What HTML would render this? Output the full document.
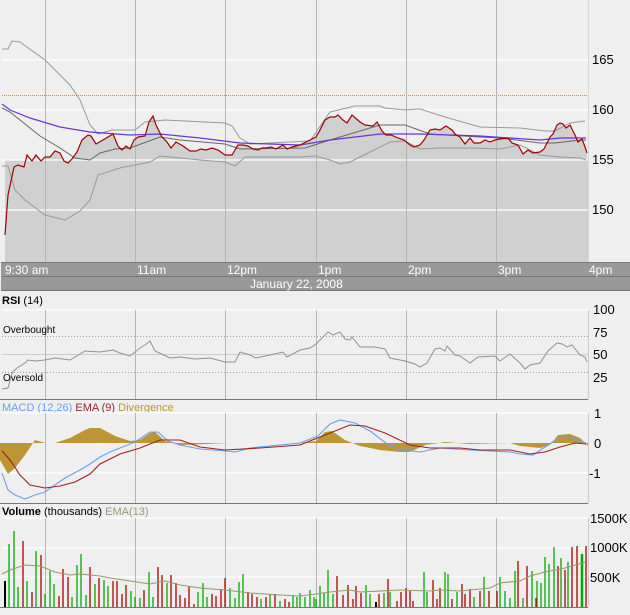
<!DOCTYPE html>
<html><head><meta charset="utf-8"><style>
html,body{margin:0;padding:0;background:#efefef;width:630px;height:615px;overflow:hidden}
svg{display:block}
text{font-family:"Liberation Sans","DejaVu Sans",sans-serif}
</style></head><body>
<svg width="630" height="615" viewBox="0 0 630 615" xmlns="http://www.w3.org/2000/svg">
<rect width="630" height="615" fill="#efefef"/>
<!-- MAIN PRICE PANEL -->
<g stroke="#ffffff" stroke-width="1.2">
<line x1="2" y1="60" x2="588" y2="60"/><line x1="2" y1="110" x2="588" y2="110"/>
</g>
<line x1="2" y1="95.5" x2="588" y2="95.5" stroke="#d4804a" stroke-width="1" stroke-dasharray="1,1"/>
<polygon fill="#d0d0d0" points="5,262 5,235 8,195 14,167 18,165 24,167 27,155 32,161 36,155 41,161 45,157 50,157 55,151 60,153 64,161 68,163 72,159 77,152 82,140 88,135 91,136 96,144 103,140 113,134 118,146 122,150 126,146 130,149 134,140 138,137 145,136 149,122 153,116 156,125 162,137 167,142 171,148 176,142 183,146 190,151 196,151 201,149 206,150 212,148 218,150 225,155 232,155 238,145 243,145 248,146 253,149 258,150 262,148 266,148 271,147 276,149 283,145 287,149 292,147 300,145 306,142 312,139 316,137 320,130 325,120 330,117 335,117 338,115 343,120 347,123 352,115 360,122 365,125 373,126 377,122 382,131 386,135 391,135 398,138 404,140 410,145 414,147 420,145 424,140 430,130 435,129 440,130 446,126 452,130 455,134 460,137 465,144 470,138 474,143 480,143 485,140 490,142 495,140 500,139 508,138 512,143 518,145 523,154 528,150 533,153 540,152 544,149 550,137 553,134 557,125 560,123 563,124 566,128 570,125 575,135 578,142 582,139 585,147 587,153 587,262"/>
<rect x="5" y="160" width="583" height="102" fill="#d0d0d0"/>
<g stroke="#ffffff" stroke-width="1.2"><line x1="2" y1="160" x2="588" y2="160"/><line x1="2" y1="210" x2="588" y2="210"/></g>
<g stroke="#b4b4b4" stroke-width="1">
<line x1="45.5" y1="0" x2="45.5" y2="262"/><line x1="135.5" y1="0" x2="135.5" y2="262"/><line x1="225.5" y1="0" x2="225.5" y2="262"/><line x1="316.5" y1="0" x2="316.5" y2="262"/><line x1="406.5" y1="0" x2="406.5" y2="262"/><line x1="496.5" y1="0" x2="496.5" y2="262"/>
</g>
<line x1="588.5" y1="0" x2="588.5" y2="262" stroke="#d8d8d8"/>
<g fill="none" stroke-width="1">
<polyline stroke="#999" points="2,49 8,49 12,41 20,42 45,60 60,75 70,85 80,100 90,125 98,134 112,130 135,130 145,122 165,120 225,123 232,126 240,138 250,144 310,141 330,112 355,106 380,106 385,108 405,110 420,109 445,117 480,127 520,128 545,131 555,131 570,123 585,121"/>
<polyline stroke="#999" points="2,166 8,166 15,190 25,200 45,215 65,220 80,211 90,200 98,175 120,168 135,165 150,162 160,156 200,160 225,162 235,166 245,157 300,157 315,156 330,160 340,164 350,162 370,152 390,142 405,141 420,149 440,148 470,148 500,149 520,145 540,155 560,157 580,158 586,160"/>
<polyline stroke="#666" points="2,108 10,112 20,120 40,136 60,148 75,158 90,160 100,153 115,149 130,148 160,137 180,140 225,144 240,149 305,148 330,140 380,125 405,125 430,134 480,137 500,138 540,143 555,143 580,140 586,140"/>
<polyline stroke="#6a35d8" stroke-width="1.2" points="2,104 10,110 30,118 60,127 90,132 130,135 160,134 200,138 240,143 300,145 330,140 380,134 420,134 480,136 540,140 560,138 586,138"/>
<polyline stroke="#a00000" stroke-width="1.2" points="5,235 8,195 14,167 18,165 24,167 27,155 32,161 36,155 41,161 45,157 50,157 55,151 60,153 64,161 68,163 72,159 77,152 82,140 88,135 91,136 96,144 103,140 113,134 118,146 122,150 126,146 130,149 134,140 138,137 145,136 149,122 153,116 156,125 162,137 167,142 171,148 176,142 183,146 190,151 196,151 201,149 206,150 212,148 218,150 225,155 232,155 238,145 243,145 248,146 253,149 258,150 262,148 266,148 271,147 276,149 283,145 287,149 292,147 300,145 306,142 312,139 316,137 320,130 325,120 330,117 335,117 338,115 343,120 347,123 352,115 360,122 365,125 373,126 377,122 382,131 386,135 391,135 398,138 404,140 410,145 414,147 420,145 424,140 430,130 435,129 440,130 446,126 452,130 455,134 460,137 465,144 470,138 474,143 480,143 485,140 490,142 495,140 500,139 508,138 512,143 518,145 523,154 528,150 533,153 540,152 544,149 550,137 553,134 557,125 560,123 563,124 566,128 570,125 575,135 578,142 582,139 585,147 587,153"/>
</g>
<g font-size="13" fill="#000"><text x="592" y="64">165</text><text x="592" y="114">160</text><text x="592" y="164">155</text><text x="592" y="214">150</text></g>
<!-- time axis bars -->
<rect x="1" y="262" width="629" height="14" fill="#999"/>
<rect x="1" y="277" width="629" height="13" fill="#999"/>
<line x1="1" y1="262.5" x2="630" y2="262.5" stroke="#777"/>
<line x1="1" y1="276.5" x2="630" y2="276.5" stroke="#777"/>
<line x1="1" y1="290.5" x2="630" y2="290.5" stroke="#777"/>
<g font-size="12" fill="#fff"><text x="5" y="274">9:30 am</text><text x="137" y="274">11am</text><text x="227" y="274">12pm</text><text x="318" y="274">1pm</text><text x="408" y="274">2pm</text><text x="498" y="274">3pm</text><text x="589" y="274">4pm</text><text x="250" y="288">January 22, 2008</text></g>
<!-- RSI -->
<text x="2" y="304" font-size="11"><tspan font-weight="bold">RSI</tspan> (14)</text>
<line x1="2" y1="310" x2="588" y2="310" stroke="#fff" stroke-width="1.2"/>
<line x1="2" y1="354.5" x2="588" y2="354.5" stroke="#ccc"/>
<g stroke="#999" stroke-dasharray="1,2"><line x1="2" y1="336.5" x2="588" y2="336.5"/><line x1="2" y1="372.5" x2="588" y2="372.5"/></g>
<g stroke="#b4b4b4"><line x1="45.5" y1="310" x2="45.5" y2="399"/><line x1="135.5" y1="310" x2="135.5" y2="399"/><line x1="225.5" y1="310" x2="225.5" y2="399"/><line x1="316.5" y1="310" x2="316.5" y2="399"/><line x1="406.5" y1="310" x2="406.5" y2="399"/><line x1="496.5" y1="310" x2="496.5" y2="399"/></g>
<line x1="588.5" y1="310" x2="588.5" y2="399" stroke="#ccc"/>
<g font-size="10" fill="#000"><text x="3" y="333">Overbought</text><text x="3" y="381">Oversold</text></g>
<polyline fill="none" stroke="#919191" points="2,389 8,388 12,373 17,368 25,363 28,360 35,361 45,360 55,358 70,360 85,351 100,352 113,350 120,353 130,356 140,348 145,345 150,341 155,351 170,358 180,357 195,359 210,358 225,362 235,362 240,352 250,355 256,358 270,355 283,352 287,357 300,350 310,348 316,344 320,340 328,332 333,335 340,332 345,339 350,340 352,337 360,347 375,347 385,349 390,358 405,361 415,364 420,367 427,363 435,349 440,348 445,351 447,346 455,355 460,356 470,363 478,357 495,356 500,361 510,354 520,363 525,369 530,365 540,363 548,351 557,343 562,344 567,347 572,345 580,355 585,357 587,362"/>
<g font-size="13"><text x="593" y="314">100</text><text x="593" y="337">75</text><text x="593" y="359">50</text><text x="593" y="382">25</text></g>
<line x1="0" y1="399.5" x2="588" y2="399.5" stroke="#777"/>
<!-- MACD -->
<text x="2" y="411" font-size="11"><tspan fill="#6d9eeb">MACD (12,26)</tspan> <tspan fill="#9a2222">EMA (9)</tspan> <tspan fill="#bd9535">Divergence</tspan></text>
<g stroke="#fff" stroke-width="1.2"><line x1="2" y1="413" x2="588" y2="413"/><line x1="2" y1="473" x2="588" y2="473"/></g>
<g stroke="#b4b4b4"><line x1="45.5" y1="413" x2="45.5" y2="503"/><line x1="135.5" y1="413" x2="135.5" y2="503"/><line x1="225.5" y1="413" x2="225.5" y2="503"/><line x1="316.5" y1="413" x2="316.5" y2="503"/><line x1="406.5" y1="413" x2="406.5" y2="503"/><line x1="496.5" y1="413" x2="496.5" y2="503"/></g>
<line x1="588.5" y1="413" x2="588.5" y2="503" stroke="#ccc"/>
<polygon fill="#bd9535" points="0,443 0,460 8,474 15,468 25,455 35,440 45,443 55,443 70,438 85,430 90,428 100,428 115,436 130,441 140,440 150,433 155,432 165,441 180,445 230,443 300,443 316,441 325,432 332,431 345,440 360,446 380,450 400,452 410,452 425,445 445,442 470,444 510,443 520,446 540,448 550,445 558,435 570,434 580,438 588,446 588,443"/>
<g fill="none" stroke-width="1.1">
<polyline stroke="#6d9eeb" points="2,473 8,490 15,495 25,499 35,495 45,492 55,485 65,478 80,470 90,464 100,457 110,452 125,446 135,442 150,432 158,432 168,441 180,445 200,449 225,451 235,452 250,448 300,443 318,436 330,424 340,420 355,423 370,431 390,446 405,450 420,452 440,448 470,450 490,451 510,452 520,454 533,455 545,447 560,437 570,437 580,441 586,443"/>
<polyline stroke="#9a2222" points="2,451 10,460 20,475 30,485 45,488 60,486 75,482 90,474 100,464 120,454 140,448 160,440 180,440 200,447 225,450 260,448 300,445 330,433 350,425 365,426 385,433 410,445 430,448 460,448 480,450 510,450 530,454 545,452 560,447 575,443 586,444"/>
</g>
<g font-size="13"><text x="594" y="418">1</text><text x="594" y="448">0</text><text x="589" y="478">-1</text></g>
<line x1="0" y1="503.5" x2="588" y2="503.5" stroke="#777"/>
<!-- VOLUME -->
<text x="2" y="515" font-size="11"><tspan font-weight="bold">Volume</tspan> (thousands) <tspan fill="#999977">EMA(13)</tspan></text>
<g stroke="#fff" stroke-width="1.2"><line x1="2" y1="518" x2="588" y2="518"/><line x1="2" y1="548" x2="588" y2="548"/><line x1="2" y1="577" x2="588" y2="577"/></g>
<g stroke="#b4b4b4"><line x1="45.5" y1="518" x2="45.5" y2="607"/><line x1="135.5" y1="518" x2="135.5" y2="607"/><line x1="225.5" y1="518" x2="225.5" y2="607"/><line x1="316.5" y1="518" x2="316.5" y2="607"/><line x1="406.5" y1="518" x2="406.5" y2="607"/><line x1="496.5" y1="518" x2="496.5" y2="607"/></g>
<line x1="588.5" y1="518" x2="588.5" y2="607" stroke="#ccc"/>
<g stroke-width="1.3">
<path stroke="#000" stroke-width="2" d="M5,607V581M376,607V602"/>
<path stroke="#0a0" d="M9,607V544M14,607V531M18,607V587M27,607V581M36,607V551M45,607V594M50,607V571M54,607V584M72,607V597M77,607V565M81,607V554M86,607V595M95,607V584M104,607V580M108,607V586M131,607V591M135,607V597M140,607V598M149,607V572M153,607V597M167,607V583M198,607V592M203,607V583M207,607V597M230,607V588M235,607V598M239,607V582M243,607V574M261,607V599M270,607V594M280,607V601M293,607V596M297,607V597M300,607V593M305,607V597M310,607V590M314,607V597M316,607V599M320,607V586M324,607V593M328,607V570M333,607V594M366,607V585M370,607V594M384,607V593M390,607V592M424,607V572M427,607V592M445,607V572M448,607V574M457,607V592M474,607V597M484,607V577M500,607V577M505,607V591M510,607V598M515,607V571M523,607V598M532,607V571M537,607V581M541,607V583M545,607V557M549,607V564M554,607V547M561,607V558M568,607V562"/>
<path stroke="#0a0" stroke-width="2.5" d="M582,607V554"/>
<path stroke="#a00" d="M23,607V541M32,607V592M41,607V555M59,607V596M63,607V569M68,607V577M90,607V567M99,607V578M113,607V581M117,607V581M122,607V594M126,607V585M144,607V590M158,607V567M162,607V575M171,607V575M176,607V583M180,607V595M185,607V598M189,607V586M194,607V604M212,607V594M216,607V596M221,607V589M225,607V578M248,607V592M252,607V594M257,607V597M266,607V597M275,607V594M285,607V599M289,607V602M337,607V576M343,607V595M348,607V585M353,607V599M356,607V586M361,607V593M379,607V594M388,607V579M397,607V601M401,607V592M406,607V588M410,607V591M413,607V601M433,607V580M437,607V599M440,607V588M452,607V599M462,607V584M465,607V594M470,607V589M480,607V591M489,607V591M497,607V591M518,607V561M527,607V566M536,607V598M558,607V566M565,607V570M572,607V547M577,607V546M586,607V546"/>
</g>
<polyline fill="none" stroke="#999966" stroke-width="1.1" points="2,574 10,570 25,565 40,566 45,568 55,572 70,575 80,574 90,575 100,576 110,578 130,581 150,584 165,581 180,585 200,588 225,590 250,593 280,595 300,596 316,594 330,592 350,590 360,592 400,590 430,591 440,590 460,591 490,588 500,583 520,581 530,576 545,572 565,568 586,562"/>
<g font-size="13"><text x="590" y="523">1500K</text><text x="590" y="552">1000K</text><text x="590" y="582">500K</text></g>
<line x1="0" y1="607.5" x2="588" y2="607.5" stroke="#777"/>
</svg>
</body></html>
